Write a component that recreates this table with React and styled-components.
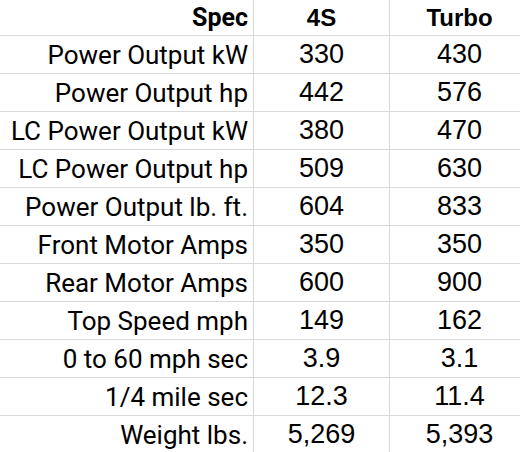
import React from "react";
import styled, { createGlobalStyle } from "styled-components";

const Global = createGlobalStyle`
  html, body { margin: 0; padding: 0; background: #fff; }
  body { width: 520px; height: 452px; overflow: hidden; }
`;

const Sheet = styled.div`
  display: grid;
  grid-template-columns: 254px 136px 140px;
  grid-auto-rows: 38px;
  grid-template-rows: 36px;
  width: 530px;
  color: #000;
`;

const Cell = styled.div`
  box-sizing: border-box;
  border-bottom: 1px solid #d9d9d9;
  border-right: 1px solid #d9d9d9;
  display: flex;
  align-items: flex-end;
  justify-content: ${(p) => (p.$label ? "flex-end" : "center")};
  padding: ${(p) => (p.$label ? "0 5px 5px 0" : "0 0 5px 0")};
  font-family: ${(p) =>
    p.$label ? "Roboto, 'Liberation Sans', sans-serif" : "'Liberation Sans', Arial, sans-serif"};
  font-size: ${(p) => (p.$header ? (p.$label ? "25px" : "24px") : p.$label ? "26px" : "27px")};
  font-weight: ${(p) => (p.$header ? 700 : 400)};
  line-height: 1;
  white-space: nowrap;
  overflow: hidden;
`;

const rows = [
  ["Power Output kW", "330", "430"],
  ["Power Output hp", "442", "576"],
  ["LC Power Output kW", "380", "470"],
  ["LC Power Output hp", "509", "630"],
  ["Power Output lb. ft.", "604", "833"],
  ["Front Motor Amps", "350", "350"],
  ["Rear Motor Amps", "600", "900"],
  ["Top Speed mph", "149", "162"],
  ["0 to 60 mph sec", "3.9", "3.1"],
  ["1/4 mile sec", "12.3", "11.4"],
  ["Weight lbs.", "5,269", "5,393"],
];

export default function App() {
  return (
    <>
      <Global />
      <Sheet>
        <Cell $label $header>Spec</Cell>
        <Cell $header>4S</Cell>
        <Cell $header>Turbo</Cell>
        {rows.map(([label, a, b]) => (
          <React.Fragment key={label}>
            <Cell $label>{label}</Cell>
            <Cell>{a}</Cell>
            <Cell>{b}</Cell>
          </React.Fragment>
        ))}
      </Sheet>
    </>
  );
}
